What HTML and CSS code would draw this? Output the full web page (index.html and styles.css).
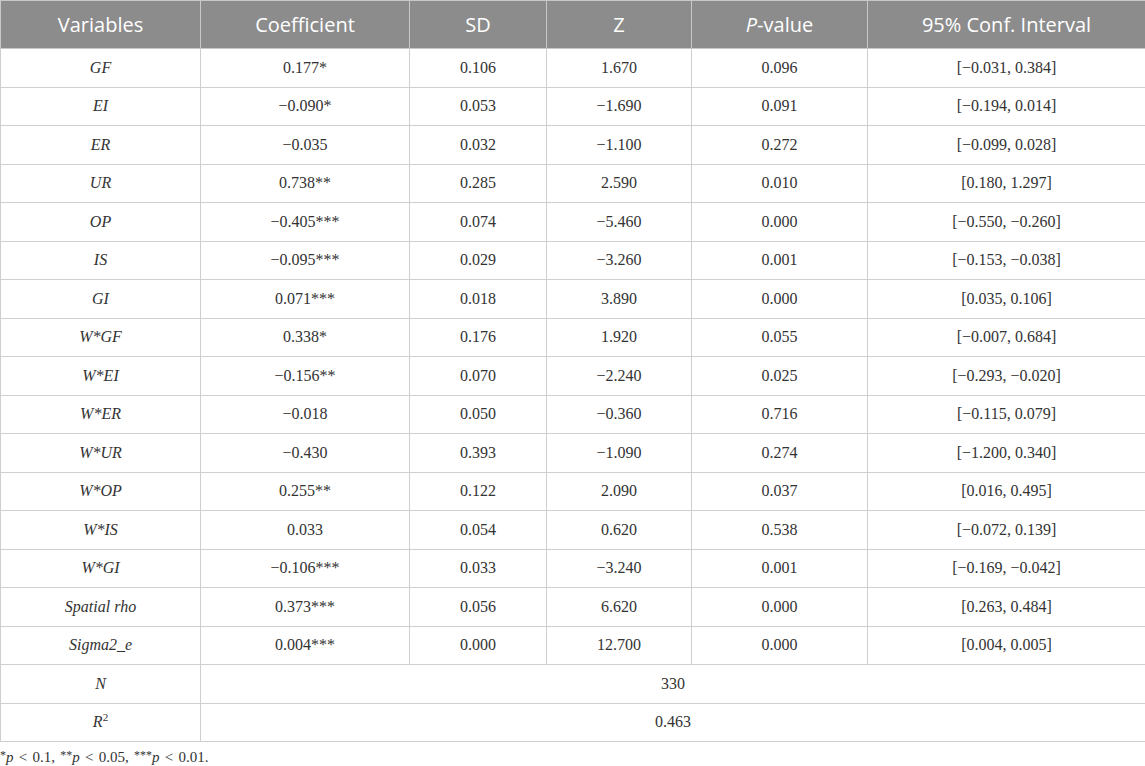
FILE: index.html
```html
<!DOCTYPE html>
<html>
<head>
<meta charset="utf-8">
<link rel="stylesheet" href="styles.css">
</head>
<body>
<table class="tbl">
<colgroup>
<col class="c1"><col class="c2"><col class="c3"><col class="c4"><col class="c5"><col class="c6">
</colgroup>
<thead>
<tr><th>Variables</th><th>Coefficient</th><th>SD</th><th>Z</th><th><i>P</i>-value</th><th>95% Conf. Interval</th></tr>
</thead>
<tbody>
<tr><td><i>GF</i></td><td>0.177*</td><td>0.106</td><td>1.670</td><td>0.096</td><td>[−0.031, 0.384]</td></tr>
<tr><td><i>EI</i></td><td>−0.090*</td><td>0.053</td><td>−1.690</td><td>0.091</td><td>[−0.194, 0.014]</td></tr>
<tr><td><i>ER</i></td><td>−0.035</td><td>0.032</td><td>−1.100</td><td>0.272</td><td>[−0.099, 0.028]</td></tr>
<tr><td><i>UR</i></td><td>0.738**</td><td>0.285</td><td>2.590</td><td>0.010</td><td>[0.180, 1.297]</td></tr>
<tr><td><i>OP</i></td><td>−0.405***</td><td>0.074</td><td>−5.460</td><td>0.000</td><td>[−0.550, −0.260]</td></tr>
<tr><td><i>IS</i></td><td>−0.095***</td><td>0.029</td><td>−3.260</td><td>0.001</td><td>[−0.153, −0.038]</td></tr>
<tr><td><i>GI</i></td><td>0.071***</td><td>0.018</td><td>3.890</td><td>0.000</td><td>[0.035, 0.106]</td></tr>
<tr><td><i>W*GF</i></td><td>0.338*</td><td>0.176</td><td>1.920</td><td>0.055</td><td>[−0.007, 0.684]</td></tr>
<tr><td><i>W*EI</i></td><td>−0.156**</td><td>0.070</td><td>−2.240</td><td>0.025</td><td>[−0.293, −0.020]</td></tr>
<tr><td><i>W*ER</i></td><td>−0.018</td><td>0.050</td><td>−0.360</td><td>0.716</td><td>[−0.115, 0.079]</td></tr>
<tr><td><i>W*UR</i></td><td>−0.430</td><td>0.393</td><td>−1.090</td><td>0.274</td><td>[−1.200, 0.340]</td></tr>
<tr><td><i>W*OP</i></td><td>0.255**</td><td>0.122</td><td>2.090</td><td>0.037</td><td>[0.016, 0.495]</td></tr>
<tr><td><i>W*IS</i></td><td>0.033</td><td>0.054</td><td>0.620</td><td>0.538</td><td>[−0.072, 0.139]</td></tr>
<tr><td><i>W*GI</i></td><td>−0.106***</td><td>0.033</td><td>−3.240</td><td>0.001</td><td>[−0.169, −0.042]</td></tr>
<tr><td><i>Spatial rho</i></td><td>0.373***</td><td>0.056</td><td>6.620</td><td>0.000</td><td>[0.263, 0.484]</td></tr>
<tr><td><i>Sigma2_e</i></td><td>0.004***</td><td>0.000</td><td>12.700</td><td>0.000</td><td>[0.004, 0.005]</td></tr>
<tr><td><i>N</i></td><td colspan="5">330</td></tr>
<tr><td><i>R</i><sup>2</sup></td><td colspan="5">0.463</td></tr>
</tbody>
</table>
<p class="note"><sup>*</sup><i>p</i> &lt; 0.1, <sup>**</sup><i>p</i> &lt; 0.05, <sup>***</sup><i>p</i> &lt; 0.01.</p>
</body>
</html>
```
FILE: styles.css
```css
html, body {
  margin: 0;
  padding: 0;
  background: #ffffff;
}
.tbl {
  width: 1145px;
  border-collapse: collapse;
  table-layout: fixed;
  font-family: "Liberation Serif", serif;
  font-size: 16px;
  color: #333333;
}
.c1 { width: 200px; }
.c2 { width: 209px; }
.c3 { width: 137px; }
.c4 { width: 145px; }
.c5 { width: 176px; }
.c6 { width: 278px; }
.tbl th {
  background: #8c8c8c;
  color: #ffffff;
  font-family: "Open Sans", sans-serif;
  font-weight: normal;
  font-size: 20px;
  height: 47px;
  padding: 0 4px;
  border: 1px solid #c8c8c8;
  text-align: center;
}
.tbl td {
  height: 37.5px;
  padding: 0 4px;
  border: 1px solid #cfcfcf;
  text-align: center;
  vertical-align: middle;
}
.tbl sup {
  font-size: 11px;
  line-height: 0;
}
.note {
  margin: 7px 0 0 0;
  font-family: "Liberation Serif", serif;
  font-size: 15px;
  word-spacing: 1.5px;
  color: #333333;
}
.note sup {
  font-size: 12px;
  line-height: 0;
  vertical-align: 3px;
  word-spacing: 0;
}
```
